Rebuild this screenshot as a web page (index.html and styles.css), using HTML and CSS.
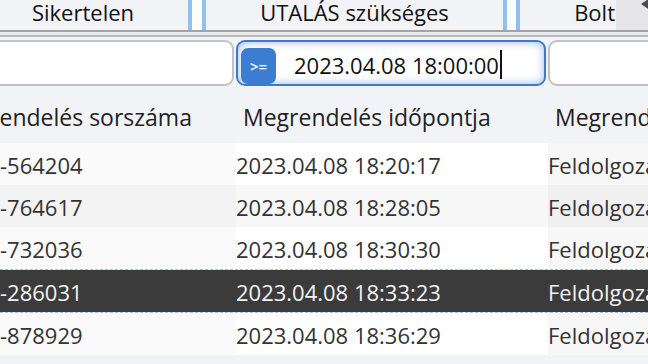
FILE: index.html
```html
<!DOCTYPE html>
<html lang="hu">

<head>
    <meta charset="UTF-8">
    <title>Megrendelések</title>
    <link rel="stylesheet" href="styles.css">
</head>

<body>

    <div class="tabs">
        <div class="tab tab-first">Sikertelen</div>
        <div class="tab-sep"></div>
        <div class="tab tab-mid">UTALÁS szükséges</div>
        <div class="tab-sep"></div>
        <div class="tab tab-last">Bolt</div>
        <div class="tab-scroll">
            <svg width="32" height="30" viewBox="0 0 32 30">
                <path d="M25 4 L34 -2 L34 10 Z" fill="#4a4a4a" />
            </svg>
        </div>
    </div>

    <div class="rule"></div>

    <div class="grid filters">
        <div class="filter"><input type="text" class="field"></div>
        <div class="filter">
            <div class="field field-active">
                <span class="op">&gt;=</span>
                <span class="value">2023.04.08 18:00:00</span><span class="caret"></span>
            </div>
        </div>
        <div class="filter filter-last"><input type="text" class="field"></div>
    </div>

    <div class="grid head">
        <div class="cell first">Megrendelés sorszáma</div>
        <div class="cell">Megrendelés időpontja</div>
        <div class="cell">Megrendelés állapota</div>
    </div>

    <div class="grid row">
        <div class="cell">-564204</div>
        <div class="cell">2023.04.08 18:20:17</div>
        <div class="cell">Feldolgozatlan</div>
    </div>
    <div class="grid row alt">
        <div class="cell">-764617</div>
        <div class="cell">2023.04.08 18:28:05</div>
        <div class="cell">Feldolgozatlan</div>
    </div>
    <div class="grid row">
        <div class="cell">-732036</div>
        <div class="cell">2023.04.08 18:30:30</div>
        <div class="cell">Feldolgozatlan</div>
    </div>
    <div class="grid row selected">
        <div class="cell">-286031</div>
        <div class="cell">2023.04.08 18:33:23</div>
        <div class="cell">Feldolgozatlan</div>
    </div>
    <div class="grid row">
        <div class="cell">-878929</div>
        <div class="cell">2023.04.08 18:36:29</div>
        <div class="cell">Feldolgozatlan</div>
    </div>

</body>

</html>
```

FILE: styles.css
```css
body {
    margin: 0;
    background: #f2f3f7;
    font-family: "Open Sans", "Noto Sans", sans-serif;
    color: #333;
    overflow: hidden;
    width: 648px;
    height: 364px;
}

.tabs {
    display: flex;
    height: 30px;
    background: #f2f3f7;
    overflow: hidden;
}

.tab {
    display: flex;
    align-items: center;
    justify-content: center;
    font-size: 22px;
    line-height: 30px;
    color: #111;
    padding-bottom: 6px;
    box-sizing: border-box;
    white-space: nowrap;
}

.tab-first {
    width: 188px;
    padding-right: 22px;
}

.tab-mid {
    width: 297px;
}

.tab-last {
    width: 96px;
    justify-content: flex-end;
    padding-right: 1px;
}

.tab-sep {
    width: 10px;
    background: #fbfcfe;
    border-left: 4px solid #93c0ea;
    border-right: 4px solid #93c0ea;
    flex-shrink: 0;
}

.tab-sep:nth-child(4) {
    width: 9px;
}

.tab-scroll {
    flex: 1;
    background: #e6e6e8;
}

.tab-scroll svg {
    display: block;
}

.rule {
    height: 3px;
    border-top: 2px solid #a3a3a3;
    border-bottom: 2px solid #b9b9b9;
    background: #e9eaee;
}

.grid {
    display: grid;
    grid-template-columns: 236px 312px 1fr;
}

.filters {
    padding: 3px 0 1px;
    height: 50px;
    box-sizing: border-box;
}

.filter {
    padding-right: 2px;
}

.filter-last {
    overflow: hidden;
    padding-right: 0;
}

.filter-last .field {
    width: 140px;
}

.field {
    display: flex;
    align-items: center;
    width: 100%;
    height: 46px;
    box-sizing: border-box;
    border: 2px solid #c2c2c2;
    border-radius: 9px;
    background: #fff;
    font: inherit;
    outline: none;
}

.filter:first-child .field {
    border-left: none;
    border-radius: 0 9px 9px 0;
}

.field-active {
    border-color: #3a7bcf;
    box-shadow: inset 0 0 9px rgba(58, 123, 207, 0.55);
    padding: 3px 0 0 3px;
}

.op {
    display: flex;
    align-items: center;
    justify-content: center;
    width: 35px;
    height: 36px;
    border-radius: 7px;
    background: #3b7dd1;
    color: #fff;
    font-size: 15px;
    font-weight: 600;
    margin-right: 18px;
    margin-top: 2px;
}

.value {
    font-size: 22px;
    color: #111;
}

.caret {
    width: 2px;
    height: 29px;
    background: #111;
    margin-left: 1px;
}

.head {
    height: 56px;
    align-items: center;
    color: #222;
    padding-top: 4px;
    box-sizing: border-box;
}

.head .cell {
    font-size: 23px;
    padding-left: 7px;
    white-space: nowrap;
    overflow: hidden;
}

.head .cell.first {
    padding-left: 0;
    text-indent: -56px;
}

.row {
    height: 42px;
    font-size: 22px;
}

.row .cell {
    display: flex;
    align-items: center;
    padding-top: 2px;
    white-space: nowrap;
    overflow: hidden;
    background: #fafafa;
}

.row .cell:nth-child(2) {
    background: #fff;
}

.row .cell:nth-child(3) {
    background: #f7f7f7;
}

.row.alt .cell {
    background: #f3f3f3;
}

.row.alt .cell:nth-child(2) {
    background: #f7f7f7;
}

.row.alt .cell:nth-child(3) {
    background: #f0f0f0;
}

.row.selected {
    height: 44px;
    border-top: 1px dashed #a9c0e6;
    border-bottom: 1px dashed #a9c0e6;
    box-sizing: border-box;
}

.row.selected .cell {
    background: #3b3b3b;
    color: #f2f2f2;
}
```
